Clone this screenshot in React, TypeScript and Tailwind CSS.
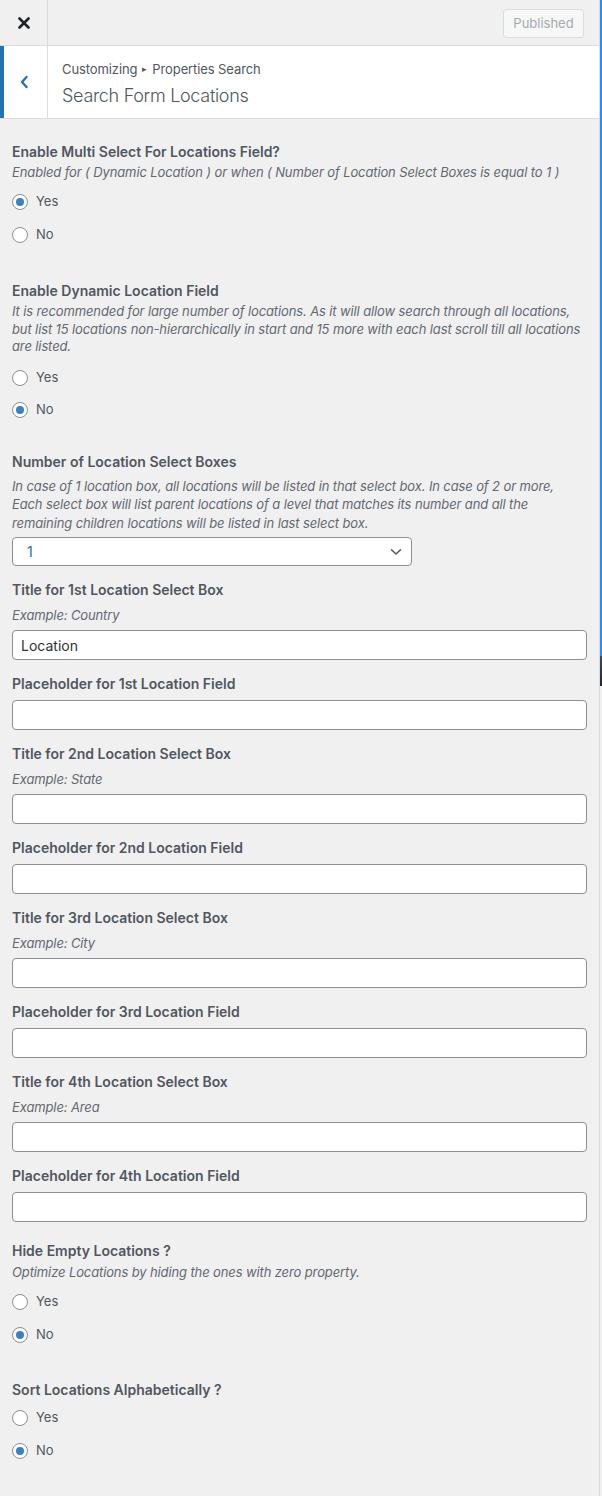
import React from "react";

function Radio({ label, checked }: { label: string; checked?: boolean }) {
  return (
    <div className="flex h-6 items-center">
      <span className="flex h-4 w-4 items-center justify-center rounded-full border border-[#8c8f94] bg-white">
        {checked && <span className="h-2 w-2 rounded-full bg-[#3582c4]" />}
      </span>
      <span className="ml-2 text-[13px] text-[#50575e]">{label}</span>
    </div>
  );
}

function TextInput({ value }: { value?: string }) {
  return (
    <input
      readOnly
      value={value ?? ""}
      className="block h-[30px] w-full rounded-[4px] border border-[#8c8f94] bg-white px-2 text-[14px] text-[#2c3338] outline-none"
    />
  );
}

function Title({ children }: { children: React.ReactNode }) {
  return <div className="text-[14px] font-semibold leading-[24px] text-[#50575e]">{children}</div>;
}

function TitleField({ title, example }: { title: string; example: string }) {
  return (
    <div className="mt-[12px]">
      <Title>{title}</Title>
      <div className="mt-[4px] text-[13px] italic leading-[18px] tracking-[-0.12px] text-[#646970]">{example}</div>
      <div className="mt-[6px]">
        <TextInput value={title.includes("1st") ? "Location" : ""} />
      </div>
    </div>
  );
}

function PlaceholderField({ title }: { title: string }) {
  return (
    <div className="mt-[12px]">
      <Title>{title}</Title>
      <div className="mt-[4px]">
        <TextInput />
      </div>
    </div>
  );
}

export default function App() {
  return (
    <div className="flex min-h-screen bg-[#f0f0f1] font-['Inter',sans-serif]">
      <div className="w-[600px] shrink-0 border-r border-[#dcdcde]">
        {/* top bar */}
        <div className="flex h-[46px] border-b border-[#dcdcde]">
          <div className="flex w-[48px] items-center justify-center border-r border-[#dcdcde]">
            <svg width="12" height="12" viewBox="0 0 12 12">
              <path d="M1.5 1.5 L10.5 10.5 M10.5 1.5 L1.5 10.5" stroke="#1d2327" strokeWidth="2.6" strokeLinecap="round" />
            </svg>
          </div>
          <div className="flex-1" />
          <div className="mr-[15px] mt-[9px] flex h-[29px] w-[81px] items-center justify-center rounded-[3px] border border-[#dcdcde] bg-[#f6f7f7] text-[13px] text-[#a7aaad]">
            Published
          </div>
        </div>
        {/* section header */}
        <div className="flex h-[73px] border-b border-[#dcdcde] bg-white">
          <div className="flex w-[48px] items-center justify-center border-l-4 border-r border-l-[#2271b1] border-r-[#dcdcde] pr-[3px]">
            <svg width="10" height="14" viewBox="0 0 10 14">
              <path d="M7.5 2 L3 7 L7.5 12" stroke="#2271b1" strokeWidth="2.4" fill="none" strokeLinecap="round" strokeLinejoin="round" />
            </svg>
          </div>
          <div className="flex flex-col pl-[14px] pt-[14px]">
            <div className="flex items-center text-[13px] leading-[18px] tracking-[-0.1px] text-[#50575e]">
              Customizing <span className="mx-[5px] text-[9px]">▸</span> Properties Search
            </div>
            <div className="mt-[5px] text-[18px] font-light leading-[26px] tracking-[-0.3px] text-[#50575e]">Search Form Locations</div>
          </div>
        </div>
        {/* content */}
        <div className="px-3 pb-8 pt-[22px]">
          {/* section 1 */}
          <div className="text-[14px] font-semibold leading-[22px] text-[#50575e]">Enable Multi Select For Locations Field?</div>
          <div className="whitespace-nowrap text-[13px] italic leading-[18px] tracking-[-0.12px] text-[#646970]">
            Enabled for ( Dynamic Location ) or when ( Number of Location Select Boxes is equal to 1 )
          </div>
          <div className="mt-[9px] flex flex-col gap-[9px]">
            <Radio label="Yes" checked />
            <Radio label="No" />
          </div>

          {/* section 2 */}
          <div className="mt-[33px] text-[14px] font-semibold leading-[22px] text-[#50575e]">Enable Dynamic Location Field</div>
          <div className="mt-[1px] whitespace-nowrap text-[13px] italic leading-[17.5px] tracking-[-0.12px] text-[#646970]">
            It is recommended for large number of locations. As it will allow search through all locations,
            <br />
            but list 15 locations non-hierarchically in start and 15 more with each last scroll till all locations
            <br />
            are listed.
          </div>
          <div className="mt-[10px] flex flex-col gap-[8px]">
            <Radio label="Yes" />
            <Radio label="No" checked />
          </div>

          {/* section 3 */}
          <div className="mt-[28.5px]">
            <Title>Number of Location Select Boxes</Title>
          </div>
          <div className="mt-[2.5px] whitespace-nowrap text-[13px] italic leading-[18.5px] tracking-[-0.12px] text-[#646970]">
            In case of 1 location box, all locations will be listed in that select box. In case of 2 or more,
            <br />
            Each select box will list parent locations of a level that matches its number and all the
            <br />
            remaining children locations will be listed in last select box.
          </div>
          <div className="mt-[5px] flex h-[29px] w-[400px] items-center justify-between rounded-[4px] border border-[#8c8f94] bg-white pl-[14px] pr-[9px]">
            <span className="text-[14px] text-[#2271b1]">1</span>
            <svg width="12" height="8" viewBox="0 0 12 8">
              <path d="M1.5 1.8 L6 6 L10.5 1.8" stroke="#50575e" strokeWidth="1.5" fill="none" strokeLinecap="round" strokeLinejoin="round" />
            </svg>
          </div>

          <TitleField title="Title for 1st Location Select Box" example="Example: Country" />
          <PlaceholderField title="Placeholder for 1st Location Field" />
          <TitleField title="Title for 2nd Location Select Box" example="Example: State" />
          <PlaceholderField title="Placeholder for 2nd Location Field" />
          <TitleField title="Title for 3rd Location Select Box" example="Example: City" />
          <PlaceholderField title="Placeholder for 3rd Location Field" />
          <TitleField title="Title for 4th Location Select Box" example="Example: Area" />
          <PlaceholderField title="Placeholder for 4th Location Field" />

          {/* section hide empty */}
          <div className="mt-[18px] text-[14px] font-semibold leading-[22px] text-[#50575e]">Hide Empty Locations ?</div>
          <div className="mt-[1px] text-[13px] italic leading-[18px] tracking-[-0.12px] text-[#646970]">
            Optimize Locations by hiding the ones with zero property.
          </div>
          <div className="mt-[9px] flex flex-col gap-[9px]">
            <Radio label="Yes" />
            <Radio label="No" checked />
          </div>

          {/* section sort */}
          <div className="mt-[32px] text-[14px] font-semibold leading-[22px] text-[#50575e]">Sort Locations Alphabetically ?</div>
          <div className="mt-[5px] flex flex-col gap-[9px]">
            <Radio label="Yes" />
            <Radio label="No" checked />
          </div>
        </div>
      </div>
      {/* preview edge */}
      <div className="flex w-[2px] flex-col">
        <div className="h-[656px] bg-[#1e90ff]" />
        <div className="h-[30px] bg-gradient-to-b from-[#3a4a6a] to-[#23262e]" />
        <div className="flex-1 bg-[#f0f0f1]" />
      </div>
    </div>
  );
}
